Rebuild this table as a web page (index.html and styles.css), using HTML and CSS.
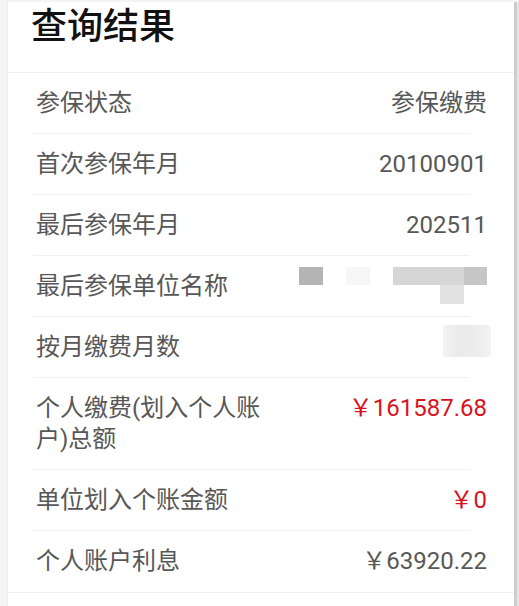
FILE: index.html
```html
<!DOCTYPE html>
<html lang="zh-CN">
<head>
<meta charset="utf-8">
<title>查询结果</title>
<link rel="stylesheet" href="styles.css">
</head>
<body>
<div class="card">
  <div class="head"><h1 class="title">查询结果</h1></div>
  <div class="list">
    <div class="row"><div class="label">参保状态</div><div class="value">参保缴费</div></div>
    <div class="row"><div class="label">首次参保年月</div><div class="value">20100901</div></div>
    <div class="row"><div class="label">最后参保年月</div><div class="value">202511</div></div>
    <div class="row"><div class="label">最后参保单位名称</div>
      <div class="value">
        <div class="mosaic">
          <span class="m m1"></span><span class="m"></span><span class="m m2"></span><span class="m"></span><span class="m m3"></span><span class="m m3"></span><span class="m m3"></span><span class="m m4"></span>
          <span class="m"></span><span class="m"></span><span class="m"></span><span class="m"></span><span class="m"></span><span class="m"></span><span class="m m5"></span><span class="m"></span>
        </div>
      </div>
    </div>
    <div class="row"><div class="label">按月缴费月数</div><div class="value"><div class="blur"></div></div></div>
    <div class="row"><div class="label">个人缴费(划入个人账户)总额</div><div class="value red">￥161587.68</div></div>
    <div class="row"><div class="label">单位划入个账金额</div><div class="value red">￥0</div></div>
    <div class="row last"><div class="label">个人账户利息</div><div class="value">￥63920.22</div></div>
  </div>
</div>
</body>
</html>
```

FILE: styles.css
```css
html, body {
  margin: 0;
  padding: 0;
  background: #f4f4f4;
  height: 100%;
  overflow: hidden;
}
body {
  font-family: Roboto, "Noto Sans CJK SC", sans-serif;
}
.card {
  margin: 2px 5px 0 7px;
  min-height: 620px;
  background: #fff;
  border-left: 1px solid #ececec;
  box-shadow: 3px 0 0 #cdcdcd, 5px 0 0 #e6e6e6;
}
.head {
  padding: 7px 0 27px 23px;
  border-bottom: 1px solid #efefef;
}
.title {
  margin: 0;
  font-family: Roboto, "Noto Sans CJK SC", sans-serif;
  font-size: 36px;
  line-height: 36px;
  font-weight: 500;
  color: #111;
}
.list {
  border-bottom: 1px solid #eeeeee;
}
.row {
  display: flex;
  align-items: flex-start;
  justify-content: space-between;
  margin: 0 27px 0 25px;
  padding: 15px 0 14px 3px;
  font-size: 24px;
  line-height: 31px;
  color: #575757;
  border-bottom: 1px solid transparent;
  background: linear-gradient(#f0f0f0, #f0f0f0) no-repeat left bottom / 437px 1px;
  background-origin: border-box;
  background-clip: border-box;
}
.row.last {
  background: none;
  border-bottom: 0;
  padding-bottom: 15px;
}
.label {
  flex: 0 1 auto;
  max-width: 232px;
}
.value {
  flex: 1 1 auto;
  display: flex;
  justify-content: flex-end;
  text-align: right;
}
.red {
  color: #d7141e;
}
.mosaic {
  display: grid;
  grid-template-columns: repeat(8, 23.5px);
  grid-template-rows: 18px 19px;
  margin: -4px 0 -2px;
}
.m1 { background: #b4b4b4; }
.m2 { background: #f6f6f6; }
.m3 { background: #d6d6d6; }
.m4 { background: #c6c6c6; }
.m5 { background: #e2e2e2; }
.blur {
  width: 48px;
  height: 32px;
  margin: -7px -4px 6px 0;
  background: linear-gradient(90deg, #f3f3f3 0%, #ebebeb 30%, #ececec 70%, #f4f4f4 100%);
  border-radius: 3px;
}
```
